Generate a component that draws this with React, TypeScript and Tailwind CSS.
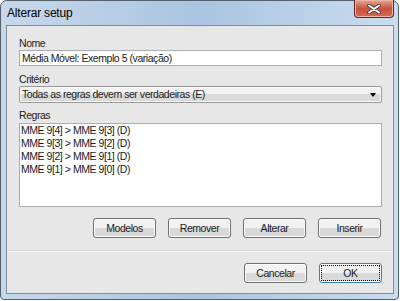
import React from 'react';

const font = { fontFamily: '"Liberation Sans", Arial, sans-serif' };

function WinButton({ label, isDefault }: { label: string; isDefault?: boolean }) {
  return (
    <button
      className={`w-[63px] h-[20px] rounded-[3px] border ${
        isDefault ? 'border-[#3c7fb1]' : 'border-[#707070]'
      } bg-gradient-to-b from-[#f2f2f2] from-50% to-[#d9d9d9] to-50% shadow-[inset_0_0_0_1px_#fcfcfc] text-[10.5px] tracking-[-0.45px] text-[#1b1b1b] leading-none ${
        isDefault ? 'outline-1 outline-dotted outline-black -outline-offset-3' : ''
      }`}
    >
      {label}
    </button>
  );
}

export default function App() {
  const regras = [
    'MME 9[4] > MME 9[3] (D)',
    'MME 9[3] > MME 9[2] (D)',
    'MME 9[2] > MME 9[1] (D)',
    'MME 9[1] > MME 9[0] (D)',
  ];

  return (
    <div className="w-[400px] h-[301px] bg-white" style={font}>
      <div className="w-[399px] h-[300px] rounded-t-[7px] rounded-b-[4px] border border-[#55606c] bg-gradient-to-r from-[#c8d8eb] via-[#a9c5e1] to-[#cadcef] pl-[5px] pr-[4px] pb-[5px] flex flex-col">
        {/* title bar */}
        <div className="h-[24px] flex items-start justify-between">
          <span className="mt-[6px] ml-[1px] text-[12px] leading-[13px] tracking-[-0.2px] text-black">Alterar setup</span>
          <div className="mt-[-1px] w-[40px] h-[18px] rounded-b-[4px] border border-[#5b2a23] border-t-0 bg-gradient-to-b from-[#e3a597] via-[#c9503c] to-[#d46a53] shadow-[inset_0_0_0_1px_#eeb4a7] flex items-center justify-center">
            <svg width="14" height="10" viewBox="0 0 14 10">
              <path d="M2 1.5 L12 8.5 M12 1.5 L2 8.5" stroke="#3a3a3a" strokeWidth="3.6" strokeLinecap="round" />
              <path d="M2 1.5 L12 8.5 M12 1.5 L2 8.5" stroke="#ffffff" strokeWidth="2" strokeLinecap="round" />
            </svg>
          </div>
        </div>

        {/* client area */}
        <div className="flex-1 border border-[#7f8d9c] bg-[#e7e7e7] flex flex-col text-[10.5px] tracking-[-0.45px] text-[#1b1b1b]">
          <div className="pl-[12px] pr-[11px] pt-[11px] flex flex-col">
            <span className="h-[13px] leading-[13px]">Nome</span>
            <div className="h-[16px] border border-[#abadb3] bg-white pl-[2px] leading-[14px]">
              Média Móvel: Exemplo 5 (variação)
            </div>

            <span className="mt-[7px] h-[13px] leading-[13px]">Critério</span>
            <div className="h-[17px] border border-[#9a9a9a] rounded-[2px] bg-gradient-to-b from-[#f2f2f2] from-50% to-[#dadada] to-50% shadow-[inset_0_0_0_1px_#f8f8f8] pl-[2px] pr-[5px] flex items-center justify-between">
              <span>Todas as regras devem ser verdadeiras (E)</span>
              <span className="w-0 h-0 border-l-[3.5px] border-r-[3.5px] border-t-[4px] border-l-transparent border-r-transparent border-t-black mt-[1px]" />
            </div>

            <span className="mt-[6px] h-[13px] leading-[13px]">Regras</span>
            <div className="mt-[1px] h-[84px] border border-[#abadb3] bg-white pl-[1px] flex flex-col">
              {regras.map((r) => (
                <span key={r} className="h-[13px] leading-[13px]">
                  {r}
                </span>
              ))}
            </div>

            <div className="mt-[11px] pr-[1px] flex justify-end gap-[12px]">
              <WinButton label="Modelos" />
              <WinButton label="Remover" />
              <WinButton label="Alterar" />
              <WinButton label="Inserir" />
            </div>
          </div>

          <div className="mt-[12px] border-t border-[#d6d6d6] border-b border-b-[#f7f7f7]" />

          <div className="pl-[12px] pr-[11px] mt-[11px] flex justify-end gap-[12px]">
            <WinButton label="Cancelar" />
            <WinButton label="OK" isDefault />
          </div>
        </div>
      </div>
    </div>
  );
}
